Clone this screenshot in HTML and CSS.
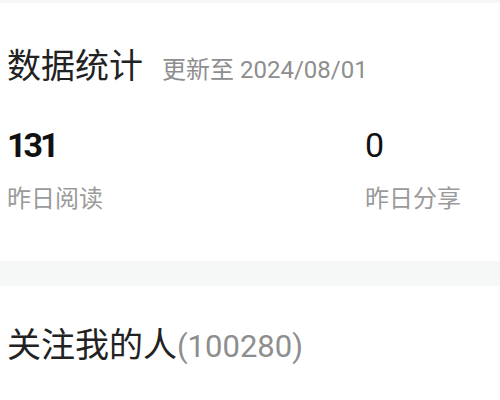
FILE: index.html
```html
<!DOCTYPE html>
<html lang="zh-CN">
<head>
<meta charset="utf-8">
<link rel="stylesheet" href="styles.css">
</head>
<body>
<div class="topbar"></div>
<section class="stats">
  <div class="head">
    <span class="title">数据统计</span>
    <span class="updated">更新至 2024/08/01</span>
  </div>
  <div class="grid">
    <div class="item">
      <div class="num">131</div>
      <div class="label">昨日阅读</div>
    </div>
    <div class="item">
      <div class="num zero">0</div>
      <div class="label">昨日分享</div>
    </div>
  </div>
</section>
<div class="band"></div>
<section class="followers">
  <span class="title">关注我的人</span><span class="count">(100280)</span>
</section>
</body>
</html>
```
FILE: styles.css
```css
html, body {
  margin: 0;
  padding: 0;
  background: #ffffff;
}
body {
  width: 500px;
  height: 400px;
  overflow: hidden;
  font-family: Roboto, "Noto Sans CJK SC", sans-serif;
}
.topbar {
  height: 3px;
  background: #f6f7f7;
}
.stats {
  padding: 43px 0 0 7px;
  height: 215px;
}
.head {
  display: flex;
  align-items: baseline;
  line-height: 40px;
}
.title {
  font-size: 34px;
  color: #222222;
}
.updated {
  font-size: 24px;
  color: #8e8e8e;
  margin-left: 19px;
}
.grid {
  display: grid;
  grid-template-columns: 358px 1fr;
  margin-top: 35px;
}
.num {
  font-size: 34px;
  font-weight: 700;
  line-height: 40px;
  letter-spacing: -3px;
  color: #111111;
}
.num.zero {
  font-weight: 400;
  letter-spacing: 0;
}
.label {
  margin-top: 19px;
  font-size: 24px;
  line-height: 30px;
  color: #9a9a9a;
}
.band {
  height: 25px;
  background: #f6f7f7;
}
.followers {
  padding: 39px 0 0 7px;
  line-height: 40px;
}
.followers .title {
  font-size: 34px;
  color: #222222;
}
.count {
  font-size: 31px;
  color: #8e8e8e;
}
```
